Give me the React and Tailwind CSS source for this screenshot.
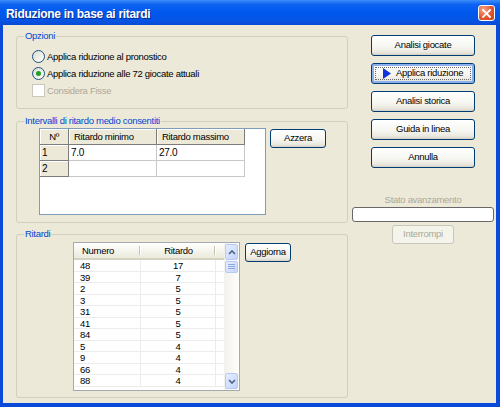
import React from 'react';

const intervalli = [
  { n: '1', min: '7.0', max: '27.0' },
  { n: '2', min: '', max: '' },
];

const ritardi = [
  ['48', '17'],
  ['39', '7'],
  ['2', '5'],
  ['3', '5'],
  ['31', '5'],
  ['41', '5'],
  ['84', '5'],
  ['5', '4'],
  ['9', '4'],
  ['66', '4'],
  ['88', '4'],
];

const btnBase =
  'flex items-center justify-center rounded-[3px] border border-[#003c74] bg-[linear-gradient(to_bottom,#ffffff_0%,#f6f6f2_55%,#ebe8df_85%,#d6d0c5_100%)] text-black';

// XP style push button
const XpButton = ({ children, className = '', isDefault = false }) => {
  if (isDefault) {
    return (
      <div className={`${btnBase} p-[1px] shadow-[inset_0_0_0_2px_#8cb0ee] ${className}`}>
        <div className="flex-1 self-stretch m-[2px] border border-dotted border-[#6b6b6b] flex items-center justify-center gap-[5px]">
          {children}
        </div>
      </div>
    );
  }
  return <div className={`${btnBase} ${className}`}>{children}</div>;
};

const Group = ({ title, className = '', children }) => (
  <div className={`relative border border-[#d0d0bf] rounded-[3px] ${className}`}>
    <span className="absolute -top-[7px] left-[7px] px-[1px] bg-[#ece9d8] text-[#0046d5] leading-[12px]">
      {title}
    </span>
    {children}
  </div>
);

const Radio = ({ checked, label }) => (
  <div className="h-[17px] flex items-center gap-[2px]">
    <span className="w-[13px] h-[13px] rounded-full border border-[#1c5180] bg-[linear-gradient(135deg,#dcdcd4,#ffffff)] flex items-center justify-center">
      {checked && <span className="w-[5px] h-[5px] rounded-full bg-[#21a121]" />}
    </span>
    <span className="leading-[12px]">{label}</span>
  </div>
);

const ScrollArrow = ({ up }) => (
  <div className="h-[16px] mx-[1px] rounded-[2px] border border-[#b7caf5] bg-[linear-gradient(135deg,#e6eeff,#c3d4fb)] flex items-center justify-center">
    <svg width="8" height="5" viewBox="0 0 8 5">
      <path
        d={up ? 'M1 4 L4 1 L7 4' : 'M1 1 L4 4 L7 1'}
        fill="none"
        stroke="#4d6185"
        strokeWidth="1.6"
      />
    </svg>
  </div>
);

const App = () => {
  return (
    <div className="w-[500px] h-[407px] flex flex-col bg-[#0a4ad8] font-['Liberation_Sans',Arial,sans-serif] text-[9.5px] tracking-[-0.3px] text-black">
      {/* title bar */}
      <div className="h-[25px] shrink-0 flex items-start justify-between pl-[6px] pr-[5px] bg-[linear-gradient(to_bottom,#3c8ef8_0%,#0d62f2_18%,#0058ee_50%,#0654e4_82%,#0a49d2_100%)]">
        <span className="mt-[7px] leading-[14px] text-white font-bold text-[12px] tracking-[-0.3px] [text-shadow:1px_1px_0_#0c2a8c]">
          Riduzione in base ai ritardi
        </span>
        <div className="mt-[5px] w-[17px] h-[16px] rounded-[3px] border border-white bg-[radial-gradient(circle_at_30%_25%,#f3a486_0%,#e2562e_55%,#c9431d_100%)] flex items-center justify-center">
          <svg width="9" height="9" viewBox="0 0 9 9">
            <path d="M1 1 L8 8 M8 1 L1 8" stroke="#ffffff" strokeWidth="1.8" strokeLinecap="square" />
          </svg>
        </div>
      </div>

      {/* client area */}
      <div className="flex-1 flex ml-[3px] mr-[4px] mb-[4px] bg-[#ece9d8]">
        <div className="ml-[13px] w-[332px] pt-[11px] flex flex-col">
          <Group title="Opzioni" className="h-[73px] pt-[11px] pl-[15px]">
            <Radio label="Applica riduzione al pronostico" />
            <Radio checked label="Applica riduzione alle 72 giocate attuali" />
            <div className="h-[17px] flex items-center gap-[2px] text-[#aca899]">
              <span className="w-[13px] h-[13px] border border-[#cac8bb] bg-white" />
              <span className="leading-[12px]">Considera Fisse</span>
            </div>
          </Group>

          <Group title="Intervalli di ritardo medio consentiti" className="mt-[12px] h-[102px] pt-[6px] pl-[22px] flex items-start">
            <div className="w-[227px] h-[87px] border border-[#7f9db9] bg-white">
              <div className="flex h-[16px]">
                <div className="w-[29px] bg-[#ece9d8] border-r border-b border-[#7c7c7c] shadow-[inset_1px_1px_0_#ffffff] flex items-center justify-center leading-[12px]">
                  Nº
                </div>
                <div className="w-[88px] bg-[#ece9d8] border-r border-b border-[#7c7c7c] shadow-[inset_1px_1px_0_#ffffff] pl-[5px] flex items-center leading-[12px]">
                  Ritardo minimo
                </div>
                <div className="w-[88px] bg-[#ece9d8] border-r border-b border-[#7c7c7c] shadow-[inset_1px_1px_0_#ffffff] pl-[5px] flex items-center leading-[12px]">
                  Ritardo massimo
                </div>
              </div>
              {intervalli.map((r) => (
                <div key={r.n} className="flex h-[16px]">
                  <div className="w-[29px] bg-[#ece9d8] border-r border-b border-[#7c7c7c] shadow-[inset_1px_1px_0_#ffffff] pl-[2px] flex items-center leading-[12px] text-[10px]">
                    {r.n}
                  </div>
                  <div className="w-[88px] border-r border-b border-[#c8c8c8] pl-[2px] flex items-center leading-[12px] text-[10px]">
                    {r.min}
                  </div>
                  <div className="w-[88px] border-r border-b border-[#c8c8c8] pl-[2px] flex items-center leading-[12px] text-[10px]">
                    {r.max}
                  </div>
                </div>
              ))}
            </div>
            <XpButton className="ml-[4px] mt-[1px] w-[56px] h-[19px]">Azzera</XpButton>
          </Group>

          <Group title="Ritardi" className="mt-[11px] h-[164px] pt-[7px] pl-[56px] flex items-start">
            <div className="w-[167px] h-[149px] border border-[#a5a9b0] bg-white flex">
              <div className="w-[150px] flex flex-col overflow-hidden">
                <div className="h-[17px] shrink-0 flex bg-[linear-gradient(to_bottom,#ffffff_0%,#f3f2ea_60%,#ebeadb_100%)] border-b-[2px] border-[#d6d2c2]">
                  <div className="w-[67px] pl-[8px] flex items-center leading-[12px] relative">
                    Numero
                    <span className="absolute right-0 top-[3px] bottom-[3px] w-[2px] border-l border-[#c7c5b2] bg-white" />
                  </div>
                  <div className="w-[75px] flex items-center justify-center leading-[12px] relative">
                    Ritardo
                    <span className="absolute right-0 top-[3px] bottom-[3px] w-[2px] border-l border-[#c7c5b2] bg-white" />
                  </div>
                  <div className="flex-1" />
                </div>
                {ritardi.map(([num, rit]) => (
                  <div key={num} className="h-[11.5px] shrink-0 flex border-b border-[#ececec]">
                    <div className="w-[67px] pl-[6px] leading-[11px] border-r border-[#ececec]">{num}</div>
                    <div className="w-[75px] text-center leading-[11px] border-r border-[#ececec]">{rit}</div>
                  </div>
                ))}
              </div>
              <div className="w-[15px] flex flex-col bg-[linear-gradient(to_right,#f3f1ec,#fefefb)] pt-[1px] pb-[1px]">
                <ScrollArrow up />
                <div className="h-[12px] mx-[1px] mt-[1px] rounded-[2px] border border-[#b7caf5] bg-[linear-gradient(135deg,#e6eeff,#c6d6fb)] flex items-center justify-center">
                  <svg width="7" height="6" viewBox="0 0 7 6">
                    <path d="M0 0.5 H7 M0 2.5 H7 M0 4.5 H7" stroke="#8fa9e0" strokeWidth="1" />
                  </svg>
                </div>
                <div className="flex-1" />
                <ScrollArrow />
              </div>
            </div>
            <XpButton className="ml-[5px] mt-[1px] w-[46px] h-[19px]">Aggiorna</XpButton>
          </Group>
        </div>

        {/* right column */}
        <div className="ml-[4px] w-[142px] pt-[10px] flex flex-col">
          <div className="ml-[19px] w-[104px] flex flex-col gap-[7px]">
            <XpButton className="h-[21px]">Analisi giocate</XpButton>
            <XpButton isDefault className="h-[21px]">
              <svg width="8" height="11" viewBox="0 0 8 11">
                <path d="M0 0 L8 5.5 L0 11 Z" fill="#1133dd" />
              </svg>
              <span>Applica riduzione</span>
            </XpButton>
            <XpButton className="h-[21px]">Analisi storica</XpButton>
            <XpButton className="h-[21px]">Guida in linea</XpButton>
            <XpButton className="h-[21px]">Annulla</XpButton>
          </div>
          <div className="mt-[26px] h-[12px] leading-[12px] text-center text-[#aca899]">Stato avanzamento</div>
          <div className="mt-[1px] h-[15px] rounded-[3px] border border-[#686868] bg-white" />
          <div className="mt-[3px] self-center w-[62px] h-[19px] rounded-[3px] border border-[#c9c7ba] bg-[#f5f4ea] text-[#aca899] flex items-center justify-center">
            Interrompi
          </div>
        </div>
      </div>
    </div>
  );
};

export default App;
